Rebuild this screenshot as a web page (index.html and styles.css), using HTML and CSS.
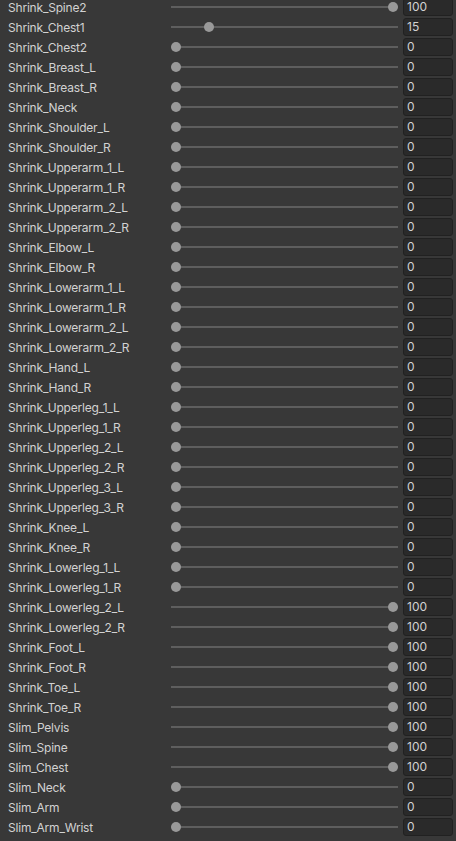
FILE: index.html
```html
<!DOCTYPE html>
<html lang="en">
<head>
    <meta charset="UTF-8">
    <meta name="viewport" content="width=device-width, initial-scale=1.0">
    <title>Blend Shapes</title>
    <link rel="stylesheet" href="styles.css">
</head>
<body>
    <div class="inspector" id="list"></div>

    <script>
        const shapes = [
            ['Shrink_Spine2', 100], ['Shrink_Chest1', 15], ['Shrink_Chest2', 0],
            ['Shrink_Breast_L', 0], ['Shrink_Breast_R', 0], ['Shrink_Neck', 0],
            ['Shrink_Shoulder_L', 0], ['Shrink_Shoulder_R', 0],
            ['Shrink_Upperarm_1_L', 0], ['Shrink_Upperarm_1_R', 0],
            ['Shrink_Upperarm_2_L', 0], ['Shrink_Upperarm_2_R', 0],
            ['Shrink_Elbow_L', 0], ['Shrink_Elbow_R', 0],
            ['Shrink_Lowerarm_1_L', 0], ['Shrink_Lowerarm_1_R', 0],
            ['Shrink_Lowerarm_2_L', 0], ['Shrink_Lowerarm_2_R', 0],
            ['Shrink_Hand_L', 0], ['Shrink_Hand_R', 0],
            ['Shrink_Upperleg_1_L', 0], ['Shrink_Upperleg_1_R', 0],
            ['Shrink_Upperleg_2_L', 0], ['Shrink_Upperleg_2_R', 0],
            ['Shrink_Upperleg_3_L', 0], ['Shrink_Upperleg_3_R', 0],
            ['Shrink_Knee_L', 0], ['Shrink_Knee_R', 0],
            ['Shrink_Lowerleg_1_L', 0], ['Shrink_Lowerleg_1_R', 0],
            ['Shrink_Lowerleg_2_L', 100], ['Shrink_Lowerleg_2_R', 100],
            ['Shrink_Foot_L', 100], ['Shrink_Foot_R', 100],
            ['Shrink_Toe_L', 100], ['Shrink_Toe_R', 100],
            ['Slim_Pelvis', 100], ['Slim_Spine', 100], ['Slim_Chest', 100],
            ['Slim_Neck', 0], ['Slim_Arm', 0], ['Slim_Arm_Wrist', 0]
        ];

        const list = document.getElementById('list');

        // Build one slider row per blend shape
        shapes.forEach(([name, value]) => {
            const row = document.createElement('div');
            row.className = 'row';
            row.innerHTML = `
                <div class="label">${name}</div>
                <div class="slider">
                    <div class="track"></div>
                    <div class="handle" style="left: calc((100% - 10px) * ${value / 100})"></div>
                </div>
                <div class="field">${value}</div>`;
            list.appendChild(row);
        });
    </script>
</body>
</html>
```

FILE: styles.css
```css
body {
    margin: 0;
    background-color: #383838;
    color: #d2d2d2;
    font-family: Inter, 'Noto Sans', sans-serif;
    font-size: 12px;
    overflow: hidden;
}
.inspector {
    margin-top: -3px;
}
.row {
    display: flex;
    align-items: center;
    height: 20px;
}
.label {
    width: 163px;
    padding-left: 8px;
    white-space: nowrap;
    letter-spacing: -0.2px;
}
.slider {
    position: relative;
    width: 227px;
    height: 20px;
}
.track {
    position: absolute;
    left: 0;
    right: 0;
    top: 9px;
    height: 2px;
    background-color: #5e5e5e;
}
.handle {
    position: absolute;
    top: 5px;
    width: 10px;
    height: 10px;
    border-radius: 50%;
    background-color: #999999;
}
.field {
    box-sizing: border-box;
    width: 50px;
    height: 18px;
    margin-left: 5px;
    margin-top: -1px;
    padding-left: 3px;
    line-height: 16px;
    background-color: #2a2a2a;
    border: 1px solid #212121;
    border-radius: 3px;
}
```
